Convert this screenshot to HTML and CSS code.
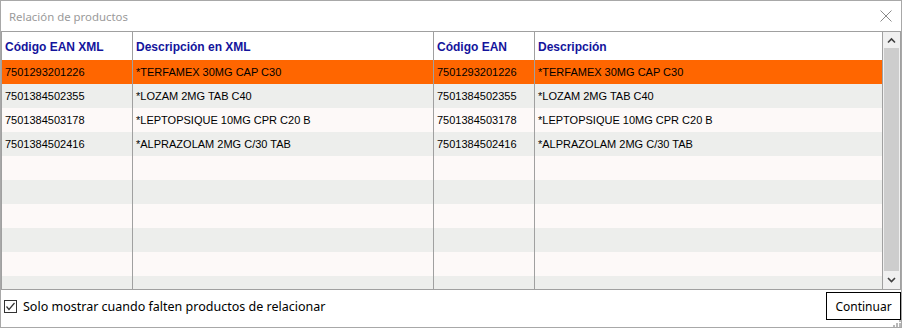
FILE: index.html
```html
<!DOCTYPE html>
<html lang="es">
<head>
<meta charset="utf-8">
<title>Relación de productos</title>
<link rel="stylesheet" href="styles.css">
</head>
<body>
<div class="window">
  <div class="titlebar">
    <span class="title">Relación de productos</span>
    <svg class="close" width="12" height="12" viewBox="0 0 12 12"><path d="M0.5 0.5 L11.5 11.5 M11.5 0.5 L0.5 11.5" stroke="#8a8a8a" stroke-width="1" fill="none"/></svg>
  </div>
  <div class="grid">
    <div class="table">
      <div class="row head">
        <div class="cell">Código EAN XML</div>
        <div class="cell">Descripción en XML</div>
        <div class="cell">Código EAN</div>
        <div class="cell">Descripción</div>
      </div>
      <div class="body">
        <div class="row sel">
          <div class="cell">7501293201226</div>
          <div class="cell">*TERFAMEX 30MG CAP C30</div>
          <div class="cell">7501293201226</div>
          <div class="cell">*TERFAMEX 30MG CAP C30</div>
        </div>
        <div class="row even">
          <div class="cell">7501384502355</div>
          <div class="cell">*LOZAM 2MG TAB C40</div>
          <div class="cell">7501384502355</div>
          <div class="cell">*LOZAM 2MG TAB C40</div>
        </div>
        <div class="row odd">
          <div class="cell">7501384503178</div>
          <div class="cell">*LEPTOPSIQUE 10MG CPR C20 B</div>
          <div class="cell">7501384503178</div>
          <div class="cell">*LEPTOPSIQUE 10MG CPR C20 B</div>
        </div>
        <div class="row even">
          <div class="cell">7501384502416</div>
          <div class="cell">*ALPRAZOLAM 2MG C/30 TAB</div>
          <div class="cell">7501384502416</div>
          <div class="cell">*ALPRAZOLAM 2MG C/30 TAB</div>
        </div>
        <div class="row odd"><div class="cell"></div><div class="cell"></div><div class="cell"></div><div class="cell"></div></div>
        <div class="row even"><div class="cell"></div><div class="cell"></div><div class="cell"></div><div class="cell"></div></div>
        <div class="row odd"><div class="cell"></div><div class="cell"></div><div class="cell"></div><div class="cell"></div></div>
        <div class="row even"><div class="cell"></div><div class="cell"></div><div class="cell"></div><div class="cell"></div></div>
        <div class="row odd"><div class="cell"></div><div class="cell"></div><div class="cell"></div><div class="cell"></div></div>
        <div class="row even"><div class="cell"></div><div class="cell"></div><div class="cell"></div><div class="cell"></div></div>
      </div>
    </div>
    <div class="scrollbar">
      <div class="sb-btn">
        <svg width="17" height="16" viewBox="0 0 17 16"><polyline points="5,10.5 8.5,7 12,10.5" fill="none" stroke="#404040" stroke-width="1.6"/></svg>
      </div>
      <div class="sb-track"><div class="sb-thumb"></div></div>
      <div class="sb-btn">
        <svg width="17" height="17" viewBox="0 0 17 17"><polyline points="5,7 8.5,10.5 12,7" fill="none" stroke="#404040" stroke-width="1.6"/></svg>
      </div>
    </div>
  </div>
  <div class="footer">
    <label class="check">
      <span class="box"><svg width="11" height="11" viewBox="0 0 11 11"><polyline points="1.5,5.5 4,8.5 9.5,2" fill="none" stroke="#333" stroke-width="1.2"/></svg></span>
      <span class="check-text">Solo mostrar cuando falten productos de relacionar</span>
    </label>
    <button class="btn">Continuar</button>
  </div>
  <div class="grip">
    <svg width="8" height="7" viewBox="0 0 8 7"><g fill="#b8b8b8"><rect x="6" y="0" width="2" height="2"/><rect x="3" y="3" width="2" height="2"/><rect x="6" y="3" width="2" height="2"/><rect x="0" y="5" width="2" height="2"/><rect x="3" y="5" width="2" height="2"/><rect x="6" y="5" width="2" height="2"/></g></svg>
  </div>
</div>
</body>
</html>
```
FILE: styles.css
```css
* { box-sizing: border-box; }
html, body { margin: 0; padding: 0; background: #ffffff; }

.window {
  position: relative;
  width: 902px;
  height: 328px;
  border: 1px solid #a8a8a8;
  background: #ffffff;
  display: flex;
  flex-direction: column;
  overflow: hidden;
}

.titlebar {
  height: 30px;
  flex: none;
  display: flex;
  align-items: center;
  justify-content: space-between;
  padding: 0 9px 0 8px;
}
.title {
  font-family: "Noto Sans", "Open Sans", sans-serif;
  font-size: 11.4px;
  color: #9a9a9a;
  padding-top: 1px;
}
.close { display: block; margin-top: 0px; }

.grid {
  height: 259px;
  flex: none;
  border: 1px solid #a0a0a0;
  display: flex;
  overflow: hidden;
}
.table {
  width: 881px;
  flex: none;
  display: flex;
  flex-direction: column;
  overflow: hidden;
}
.body { overflow: hidden; flex: 1; }

.row {
  display: grid;
  grid-template-columns: 131px 301px 101px 348px;
  height: 24px;
  font-family: "Liberation Sans", Arial, sans-serif;
  font-size: 11px;
  color: #000000;
}
.cell {
  border-right: 1px solid #a0a0a0;
  padding-left: 3px;
  display: flex;
  align-items: center;
  white-space: nowrap;
  overflow: hidden;
}
.row.head {
  height: 28px;
  background: #ffffff;
  font-weight: bold;
  font-size: 12px;
  color: #14149c;
}
.row.head .cell { padding-top: 2px; }
.row.sel { background: #ff6600; }
.row.even { background: #edeeec; }
.row.odd { background: #fdf9f8; }

.scrollbar {
  width: 17px;
  flex: none;
  background: #f0f0f0;
  display: flex;
  flex-direction: column;
}
.sb-btn { height: 16px; flex: none; }
.sb-btn:last-child { height: 18px; }
.sb-btn svg { display: block; }
.sb-track { flex: 1; padding: 0 1px; }
.sb-thumb { height: 100%; background: #cdcdcd; }

.footer {
  height: 37px;
  flex: none;
  display: flex;
  align-items: center;
  justify-content: space-between;
  padding: 2px 0 7px 3px;
}
.check {
  display: flex;
  align-items: center;
  gap: 6px;
  font-family: "Noto Sans", "Open Sans", sans-serif;
  font-size: 12.5px;
  color: #000000;
}
.box {
  width: 13px;
  height: 13px;
  border: 1px solid #333333;
  background: #ffffff;
  display: flex;
  align-items: center;
  justify-content: center;
}
.box svg { display: block; }
.btn {
  width: 75px;
  height: 28px;
  border: 1px solid #000000;
  background: #ffffff;
  font-family: "Noto Sans", "Open Sans", sans-serif;
  font-size: 12px;
  color: #000000;
  padding: 0;
  margin: 0;
}
.grip {
  position: absolute;
  right: 0;
  bottom: 0;
  line-height: 0;
}
```
